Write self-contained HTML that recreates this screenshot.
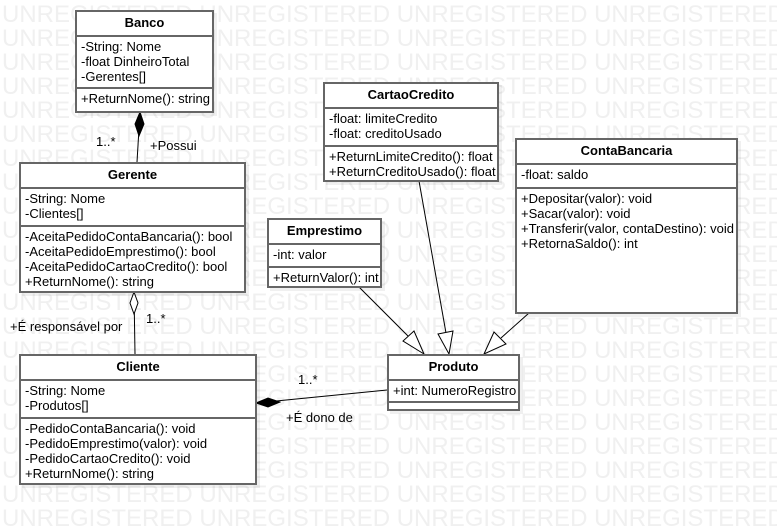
<!DOCTYPE html>
<html><head><meta charset="utf-8"><style>
body{margin:0;width:777px;height:524px;background:#fff;position:relative;overflow:hidden;font-family:"Liberation Sans",sans-serif}
.wm{position:absolute;left:2px;top:3px;font-size:24px;line-height:24px;color:#f0f0f0;white-space:pre;letter-spacing:0}
.b{position:absolute;background:#fff;border:2px solid #666;box-sizing:border-box;font-size:13px;color:#000;box-shadow:3px 3px 0 rgba(0,0,0,0.06)}
.h{height:23px;line-height:22px;text-align:center;font-weight:bold;border-bottom:2px solid #666}
.s{border-bottom:2px solid #666;padding:2px 0 3px 4px;line-height:15px;box-sizing:border-box}
.s:last-child{border-bottom:none}
.t{position:absolute;font-size:13px;white-space:nowrap}
svg{position:absolute;left:0;top:0}
</style></head><body>
<div class="wm">UNREGISTERED UNREGISTERED UNREGISTERED UNREGISTERED
UNREGISTERED UNREGISTERED UNREGISTERED UNREGISTERED
UNREGISTERED UNREGISTERED UNREGISTERED UNREGISTERED
UNREGISTERED UNREGISTERED UNREGISTERED UNREGISTERED
UNREGISTERED UNREGISTERED UNREGISTERED UNREGISTERED
UNREGISTERED UNREGISTERED UNREGISTERED UNREGISTERED
UNREGISTERED UNREGISTERED UNREGISTERED UNREGISTERED
UNREGISTERED UNREGISTERED UNREGISTERED UNREGISTERED
UNREGISTERED UNREGISTERED UNREGISTERED UNREGISTERED
UNREGISTERED UNREGISTERED UNREGISTERED UNREGISTERED
UNREGISTERED UNREGISTERED UNREGISTERED UNREGISTERED
UNREGISTERED UNREGISTERED UNREGISTERED UNREGISTERED
UNREGISTERED UNREGISTERED UNREGISTERED UNREGISTERED
UNREGISTERED UNREGISTERED UNREGISTERED UNREGISTERED
UNREGISTERED UNREGISTERED UNREGISTERED UNREGISTERED
UNREGISTERED UNREGISTERED UNREGISTERED UNREGISTERED
UNREGISTERED UNREGISTERED UNREGISTERED UNREGISTERED
UNREGISTERED UNREGISTERED UNREGISTERED UNREGISTERED
UNREGISTERED UNREGISTERED UNREGISTERED UNREGISTERED
UNREGISTERED UNREGISTERED UNREGISTERED UNREGISTERED
UNREGISTERED UNREGISTERED UNREGISTERED UNREGISTERED
UNREGISTERED UNREGISTERED UNREGISTERED UNREGISTERED</div>
<svg width="777" height="524">
<g stroke="#000" stroke-width="1" fill="none">
<line x1="140" y1="112" x2="137" y2="162"/>
<polygon points="140,112 144,124 139,136 135,124" fill="#000"/>
<line x1="134" y1="292" x2="135" y2="354"/>
<polygon points="134,292 138,303 134,314 130,303" fill="#fff"/>
<line x1="256" y1="403" x2="387" y2="390"/>
<polygon points="256,403 268,398 280,402 268,407" fill="#000"/>
<line x1="359" y1="287" x2="408" y2="336"/>
<polygon points="424,354 403,341 414,331" fill="#fff"/>
<line x1="419" y1="181" x2="446" y2="333"/>
<polygon points="449,354 438,334 453,331" fill="#fff"/>
<line x1="529" y1="313" x2="501" y2="338"/>
<polygon points="484,354 494,332 506,344" fill="#fff"/>
</g></svg>
<div class="b" style="left:75px;top:10px;width:139px;height:103px"><div class="h">Banco</div><div class="s" style="height:52px">-String: Nome<br>-float DinheiroTotal<br>-Gerentes[]</div><div class="s">+ReturnNome(): string</div></div>
<div class="b" style="left:19px;top:162px;width:227px;height:131px"><div class="h">Gerente</div><div class="s" style="height:38px">-String: Nome<br>-Clientes[]</div><div class="s">-AceitaPedidoContaBancaria(): bool<br>-AceitaPedidoEmprestimo(): bool<br>-AceitaPedidoCartaoCredito(): bool<br>+ReturnNome(): string</div></div>
<div class="b" style="left:323px;top:82px;width:176px;height:100px"><div class="h">CartaoCredito</div><div class="s" style="height:38px">-float: limiteCredito<br>-float: creditoUsado</div><div class="s">+ReturnLimiteCredito(): float<br>+ReturnCreditoUsado(): float</div></div>
<div class="b" style="left:515px;top:138px;width:223px;height:176px"><div class="h">ContaBancaria</div><div class="s" style="height:24px">-float: saldo</div><div class="s">+Depositar(valor): void<br>+Sacar(valor): void<br>+Transferir(valor, contaDestino): void<br>+RetornaSaldo(): int</div></div>
<div class="b" style="left:267px;top:218px;width:115px;height:70px"><div class="h">Emprestimo</div><div class="s" style="height:23px">-int: valor</div><div class="s">+ReturnValor(): int</div></div>
<div class="b" style="left:19px;top:354px;width:238px;height:131px"><div class="h">Cliente</div><div class="s" style="height:38px">-String: Nome<br>-Produtos[]</div><div class="s">-PedidoContaBancaria(): void<br>-PedidoEmprestimo(valor): void<br>-PedidoCartaoCredito(): void<br>+ReturnNome(): string</div></div>
<div class="b" style="left:387px;top:354px;width:133px;height:57px"><div class="h">Produto</div><div class="s" style="height:22px">+int: NumeroRegistro</div><div class="s"></div></div>
<div class="t" style="left:96px;top:134px">1..*</div>
<div class="t" style="left:150px;top:138px">+Possui</div>
<div class="t" style="left:146px;top:311px">1..*</div>
<div class="t" style="left:10px;top:319px">+É responsável por</div>
<div class="t" style="left:298px;top:372px">1..*</div>
<div class="t" style="left:286px;top:410px">+É dono de</div>
</body></html>
